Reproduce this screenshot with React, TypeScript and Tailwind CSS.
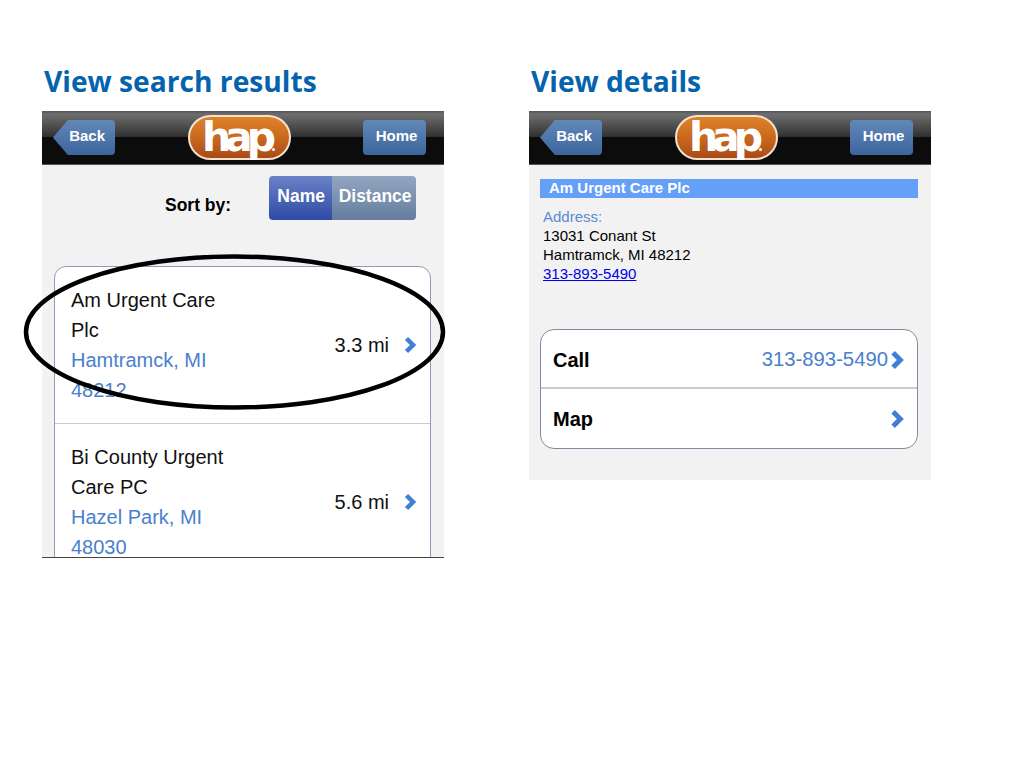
const Chevron = ({ className = "" }: { className?: string }) => (
  <svg viewBox="0 0 12 18" className={`shrink-0 ${className}`}>
    <path d="M2.5 2.5 L9 9 L2.5 15.5" fill="none" stroke="#3f7fd6" strokeWidth="4.5" />
  </svg>
);

const NavBar = () => (
  <div className="flex h-[54px] items-center justify-between border-b border-[#555] bg-[linear-gradient(to_bottom,#555_0%,#6e6e6e_6%,#2e2e2e_50%,#0c0c0c_50%,#0c0c0c_100%)] pl-[11px] pr-[18px]">
    <button className="flex h-[35px] w-[62px] items-center justify-end rounded-r-[4px] bg-[linear-gradient(to_bottom,#6288b8,#3c659d)] pb-[3px] pr-[10px] text-[15px] font-bold text-white [clip-path:polygon(24%_0,100%_0,100%_100%,24%_100%,0_50%)]">
      Back
    </button>
    <div className="relative flex h-[45px] w-[103px] items-center justify-center rounded-[23px] border-2 border-[#f6e2cf] bg-[linear-gradient(to_bottom,#e0812a,#c9691f_50%,#a94a18)]">
      <span className="pr-[6px] font-['DejaVu_Sans',sans-serif] text-[41px] leading-[45px] font-bold tracking-[-6px] text-white">hap</span>
      <span className="absolute bottom-[7px] right-[14px] h-[3px] w-[3px] rounded-full bg-white" />
    </div>
    <button className="flex h-[35px] w-[63px] items-center justify-center rounded-[4px] bg-[linear-gradient(to_bottom,#6288b8,#3c659d)] pb-[3px] pl-[4px] text-[15px] font-bold text-white">
      Home
    </button>
  </div>
);

const ResultRow = ({ name, city, dist }: { name: string; city: string; dist: string }) => (
  <div className="flex items-center border-b border-[#c8ccd2] pb-[18px] pl-[16px] pr-[14px] pt-[18px]">
    <div className="w-[165px] text-[20px] leading-[30px]">
      <div className="text-[#111]">{name}</div>
      <div className="text-[#4a80cc]">{city}</div>
    </div>
    <span className="ml-auto text-[20px] text-[#111]">{dist}</span>
    <Chevron className="ml-[15px] h-[20px] w-[12px]" />
  </div>
);

export default function App() {
  return (
    <div className="relative flex min-h-[768px] gap-[85px] bg-white pl-[42px] font-['Liberation_Sans',sans-serif]">
      <div className="w-[402px]">
        <h2 className="mb-[11px] mt-[62px] h-[38px] pl-[2px] font-['Open_Sans',sans-serif] text-[28.2px] leading-[38px] font-bold text-[#0563ad]">
          View search results
        </h2>
        <div className="h-[447px] overflow-hidden border-b border-[#444] bg-[#f2f2f2]">
          <NavBar />
          <div className="flex h-[101px] items-start pl-[123px] pt-[11px]">
            <span className="mt-[16px] text-[17.5px] leading-[26px] font-bold text-black">Sort by:</span>
            <div className="ml-[38px] flex h-[44px] w-[147px] overflow-hidden rounded-[4px] text-[17.5px] font-bold text-white">
              <div className="flex w-[63px] items-center justify-center bg-[linear-gradient(to_bottom,#6a82c6,#2f4aa6)] pb-[4px] pl-[1px]">Name</div>
              <div className="flex flex-1 items-center justify-center bg-[linear-gradient(to_bottom,#93a6c0,#647d9e)] pb-[4px] pl-[2px]">Distance</div>
            </div>
          </div>
          <div className="ml-[12px] mr-[13px] h-[400px] rounded-[12px] border border-[#8c9db5] bg-white">
            <ResultRow name="Am Urgent Care Plc" city="Hamtramck, MI 48212" dist="3.3 mi" />
            <ResultRow name="Bi County Urgent Care PC" city="Hazel Park, MI 48030" dist="5.6 mi" />
          </div>
        </div>
      </div>

      <div className="w-[402px]">
        <h2 className="mb-[11px] mt-[62px] h-[38px] pl-[2px] font-['Open_Sans',sans-serif] text-[28.2px] leading-[38px] font-bold text-[#0563ad]">
          View details
        </h2>
        <div className="h-[369px] bg-[#f2f2f2]">
          <NavBar />
          <div className="px-[11px] pt-[14px]">
            <div className="flex h-[19px] w-[378px] items-center bg-[#64a0f8] pl-[9px] text-[15px] font-bold text-white">
              Am Urgent Care Plc
            </div>
            <div className="mt-[9px] pl-[3px] text-[15px] leading-[19px] text-black">
              <div className="text-[#5b8bd6]">Address:</div>
              <div>13031 Conant St</div>
              <div>Hamtramck, MI 48212</div>
              <a href="#" className="text-[#0000ee] underline">313-893-5490</a>
            </div>
            <div className="mt-[46px] w-[378px] rounded-[14px] border border-[#7d8ca3] bg-white text-[20px]">
              <div className="flex h-[59px] items-center border-b-2 border-[#c8ccd2] pl-[12px] pr-[13px] pt-[2px]">
                <span className="font-bold text-black">Call</span>
                <span className="ml-auto text-[20.3px] text-[#4a80cc]">313-893-5490</span>
                <Chevron className="ml-[2px] h-[20px] w-[14px]" />
              </div>
              <div className="flex h-[59px] items-center pl-[12px] pr-[13px]">
                <span className="font-bold text-black">Map</span>
                <Chevron className="ml-auto h-[20px] w-[14px]" />
              </div>
            </div>
          </div>
        </div>
      </div>

      {/* hand drawn circle round the first result */}
      <svg className="pointer-events-none absolute left-0 top-0 h-[768px] w-[1024px]" viewBox="0 0 1024 768">
        <ellipse cx="234.5" cy="332" rx="208.5" ry="75.5" fill="none" stroke="#000" strokeWidth="4.5" />
      </svg>
    </div>
  );
}
